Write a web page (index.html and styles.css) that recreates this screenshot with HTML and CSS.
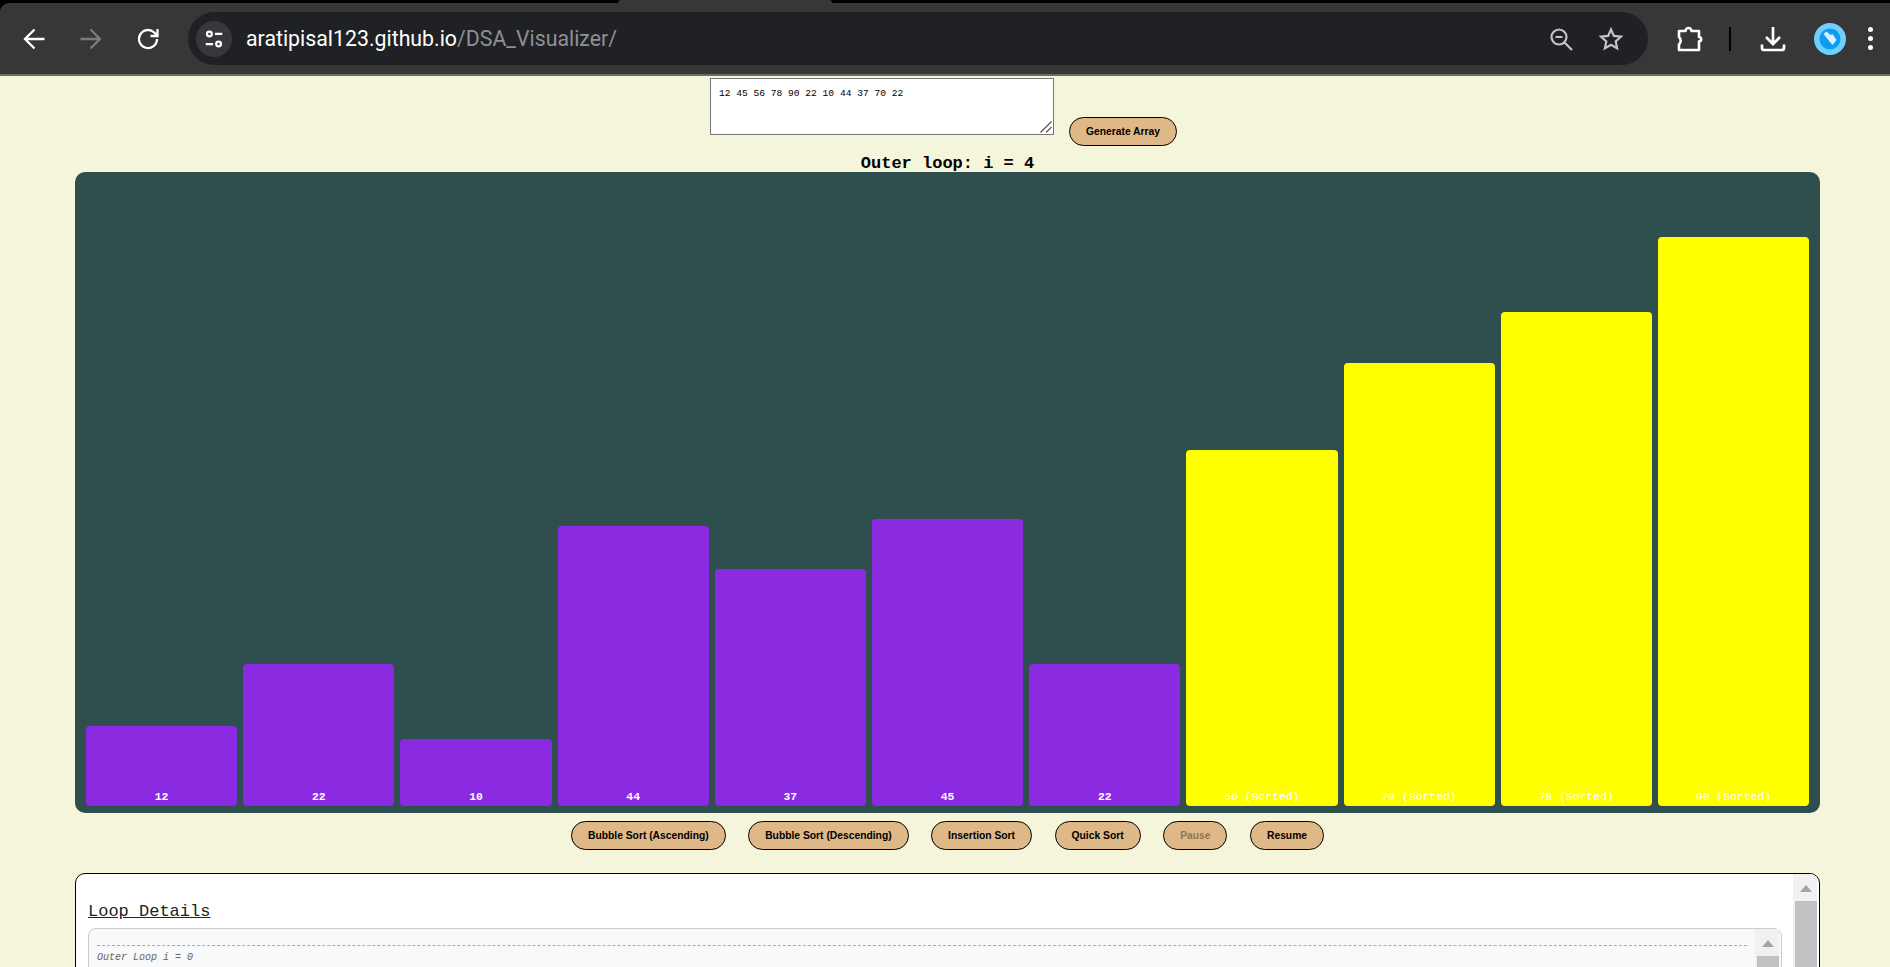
FILE: index.html
```html
<!DOCTYPE html>
<html lang="en">

<head>
     <meta charset="UTF-8">
     <meta name="viewport" content="width=device-width, initial-scale=1.0">
     <title>DSA Visualizer</title>
     <link rel="stylesheet" href="styles.css">
</head>

<body>
     <!-- Browser toolbar -->
     <div class="window-top">
          <span class="active-tab"></span>
          <header class="toolbar">
               <svg class="tool-icon" viewBox="0 0 26 26"><path d="M23.500 13H5M13.500 3.500 4 13l9.500 9.500" /></svg>
               <svg class="tool-icon tool-off" viewBox="0 0 26 26"><path d="M2.500 13H21M12.500 3.500 22 13l-9.500 9.500" /></svg>
               <svg class="tool-icon reload-icon" viewBox="0 0 26 26"><path d="M22 13a9 9 0 1 1-2.800-6.500L22 9.200M22.500 3v7H15.500" /></svg>
               <div class="omnibox">
                    <span class="site-info">
                         <svg viewBox="0 0 24 24"><circle cx="7" cy="6.500" r="2.600" /><path d="M13 6.500h8M3 17.500h8" /><circle cx="17" cy="17.500" r="2.600" /></svg>
                    </span>
                    <span class="url">aratipisal123.github.io<span class="url-path">/DSA_Visualizer/</span></span>
                    <svg class="omni-icon" viewBox="0 0 24 24"><circle cx="10" cy="10" r="7.500" /><path d="M6.500 10h7M15.500 15.500 23 23" /></svg>
                    <svg class="omni-icon" viewBox="0 0 24 24"><path d="M12 2.500l2.900 6.400 7 .8-5.200 4.700 1.400 6.900-6.100-3.500-6.100 3.500 1.400-6.900-5.200-4.700 7-.8z" /></svg>
               </div>
               <svg class="tool-icon ext-icon" viewBox="0 0 26 26"><path d="M2 5h6.500a3 3 0 0 1 6 0H22v6a2.200 2.200 0 0 1 0 4.400V24H2v-5.500a5 5 0 0 0 0-7.500z" /></svg>
               <span class="divider"></span>
               <svg class="tool-icon dl-icon" viewBox="0 0 26 26"><path d="M13 1v16.500M6 11l7 7 7-7M2 18.500V22a2 2 0 0 0 2 2h18a2 2 0 0 0 2-2v-3.500" /></svg>
               <svg class="avatar" viewBox="0 0 32 32">
                    <circle cx="16" cy="16" r="16" fill="#6fd0ff" />
                    <circle cx="16" cy="16" r="10.500" fill="#0b9df0" />
                    <path d="M9.500 11 12.500 8.500 16.500 12 18.500 11 22.500 17 18.500 22 13.500 16z" fill="#d8f1ff" />
               </svg>
               <span class="menu-dots"><i></i><i></i><i></i></span>
          </header>
     </div>

     <main class="page">
          <div class="input-row">
               <div class="input-wrap">
                    <textarea class="array-input" spellcheck="false">12 45 56 78 90 22 10 44 37 70 22</textarea>
                    <svg class="resize-grip" viewBox="0 0 12 12"><path d="M0.500 11.500 11.500 0.500M6 11.500 11.500 6" /></svg>
               </div>
               <button class="btn">Generate Array</button>
          </div>
          <h3 class="outer-label">Outer loop: i = 4</h3>

          <section class="bars">
               <div class="bar" style="height: 80px">12</div>
               <div class="bar" style="height: 142px">22</div>
               <div class="bar" style="height: 67px">10</div>
               <div class="bar" style="height: 280px">44</div>
               <div class="bar" style="height: 237px">37</div>
               <div class="bar" style="height: 287px">45</div>
               <div class="bar" style="height: 142px">22</div>
               <div class="bar sorted" style="height: 356px">56 (Sorted)</div>
               <div class="bar sorted" style="height: 443px">70 (Sorted)</div>
               <div class="bar sorted" style="height: 494px">78 (Sorted)</div>
               <div class="bar sorted" style="height: 569px">90 (Sorted)</div>
          </section>

          <div class="controls">
               <button class="btn">Bubble Sort (Ascending)</button>
               <button class="btn">Bubble Sort (Descending)</button>
               <button class="btn">Insertion Sort</button>
               <button class="btn">Quick Sort</button>
               <button class="btn" disabled>Pause</button>
               <button class="btn">Resume</button>
          </div>

          <section class="loop-box">
               <div class="loop-content">
                    <h2 class="loop-title">Loop Details</h2>
                    <div class="loop-log">
                         <div class="log-body">
                              <p class="log-line">Outer Loop i = 0</p>
                         </div>
                         <div class="scrollbar"><span class="arrow"></span><span class="thumb"></span></div>
                    </div>
               </div>
               <div class="scrollbar"><span class="arrow"></span><span class="thumb"></span></div>
          </section>
     </main>
</body>

</html>
```

FILE: styles.css
```css
/* Base styles */
body {
     margin: 0;
     height: 100vh;
     overflow: hidden;
     display: flex;
     flex-direction: column;
     background-color: #f5f5dc;
     font-family: "Liberation Mono", monospace;
}

/* Browser toolbar */
.window-top {
     position: relative;
     padding-top: 3px;
     background-color: #000;
     flex-shrink: 0;
}

.active-tab {
     position: absolute;
     top: 0;
     left: 618px;
     width: 214px;
     height: 3px;
     border-radius: 8px 8px 0 0;
     background-color: #373737;
}

.toolbar {
     height: 71px;
     border-bottom: 2px solid #6b6b66;
     border-radius: 9px 0 0 0;
     background-color: #373737;
     display: flex;
     align-items: center;
     padding-left: 21px;
}

.tool-icon {
     width: 26px;
     height: 26px;
     margin-right: 31px;
     fill: none;
     stroke: #fff;
     stroke-width: 2.300;
     flex-shrink: 0;
}

.tool-off {
     stroke: #7b7b7b;
}

.reload-icon {
     margin-right: 27px;
}

.omnibox {
     width: 1460px;
     height: 53px;
     border-radius: 27px;
     background-color: #202124;
     display: flex;
     align-items: center;
     flex-shrink: 0;
}

.site-info {
     width: 36px;
     height: 36px;
     margin: 0 14px 0 8px;
     border-radius: 50%;
     background-color: #37383b;
     display: flex;
     align-items: center;
     justify-content: center;
}

.site-info svg {
     width: 22px;
     height: 22px;
     fill: none;
     stroke: #fff;
     stroke-width: 2.400;
}

.url {
     flex: 1;
     color: #fff;
     font-family: Roboto, sans-serif;
     font-size: 21.300px;
}

.url-path {
     color: #8f9094;
}

.omni-icon {
     width: 24px;
     height: 24px;
     margin-right: 25px;
     margin-left: 1px;
     fill: none;
     stroke: #c4c4c4;
     stroke-width: 2.200;
}

.ext-icon {
     margin: 0 26px 0 29px;
     stroke-width: 2.600;
     stroke-linejoin: round;
}

.divider {
     width: 2px;
     height: 24px;
     background-color: #000;
     margin-right: 29px;
     flex-shrink: 0;
}

.dl-icon {
     margin-right: 28px;
     stroke-width: 2.700;
}

.avatar {
     width: 32px;
     height: 32px;
     flex-shrink: 0;
}

.menu-dots {
     margin-left: 22px;
     display: flex;
     flex-direction: column;
     gap: 4px;
}

.menu-dots i {
     width: 5px;
     height: 5px;
     border-radius: 50%;
     background-color: #fff;
}

/* Page */
.page {
     flex: 1;
     min-height: 0;
     overflow: hidden;
     display: flex;
     flex-direction: column;
     padding: 2px 70px 0 75px;
}

.input-row {
     display: flex;
     justify-content: center;
     align-items: flex-end;
     gap: 15px;
     padding-right: 8px;
     flex-shrink: 0;
}

.input-wrap {
     position: relative;
     display: flex;
     margin-bottom: 11px;
}

.array-input {
     width: 344px;
     height: 57px;
     box-sizing: border-box;
     padding: 9px 8px;
     border: 1px solid #767676;
     background: #fff;
     color: #000;
     font-family: "Liberation Mono", monospace;
     font-size: 9.600px;
     resize: none;
}

.resize-grip {
     position: absolute;
     right: 2px;
     bottom: 2px;
     width: 12px;
     height: 12px;
     fill: none;
     stroke: #555;
     stroke-width: 1.200;
}

.btn {
     height: 29px;
     padding: 0 16px;
     border: 1px solid #000;
     border-radius: 15px;
     background-color: #deb887;
     color: #000;
     font-family: "Liberation Sans", sans-serif;
     font-size: 10.300px;
     font-weight: bold;
}

.btn:disabled {
     color: rgba(0, 0, 0, 0.4);
}

.outer-label {
     margin: 0;
     height: 26px;
     box-sizing: border-box;
     padding-top: 8px;
     line-height: 19px;
     text-align: center;
     font-size: 17px;
     color: #000;
     flex-shrink: 0;
}

/* Bars */
.bars {
     height: 641px;
     box-sizing: border-box;
     padding: 0 11px 7px 11px;
     border-radius: 10px;
     background-color: #2f4f4f;
     display: flex;
     align-items: flex-end;
     gap: 6px;
     flex-shrink: 0;
}

.bar {
     flex: 1;
     border-radius: 4px;
     background-color: #8a2be2;
     color: #fff;
     font-size: 11.400px;
     font-weight: bold;
     display: flex;
     align-items: flex-end;
     justify-content: center;
     padding-bottom: 3px;
     box-sizing: border-box;
}

.sorted {
     background-color: #ffff00;
     font-weight: normal;
}

.controls {
     display: flex;
     justify-content: center;
     gap: 22.500px;
     margin-top: 8px;
     flex-shrink: 0;
}

/* Loop details */
.loop-box {
     margin-top: 23px;
     height: 130px;
     box-sizing: border-box;
     border: 1px solid #000;
     border-radius: 10px 10px 0 0;
     background-color: #fff;
     display: flex;
     flex-shrink: 0;
     overflow: hidden;
}

.loop-content {
     flex: 1;
     min-width: 0;
     padding: 28px 11px 0 12px;
}

.loop-title {
     margin: 0 0 6px;
     font-size: 17px;
     font-weight: normal;
     line-height: 20px;
     color: #222;
     text-decoration: underline;
}

.loop-log {
     height: 200px;
     box-sizing: border-box;
     border: 1px solid #ccc;
     border-radius: 8px;
     background-color: #f8f9fa;
     display: flex;
}

.log-body {
     flex: 1;
     padding: 16px 8px 0;
}

.log-line {
     margin: 0;
     border-top: 1px dashed #aaa;
     padding-top: 6px;
     font-size: 10px;
     font-style: italic;
     color: #666;
}

/* Scrollbars */
.scrollbar {
     width: 24px;
     margin-right: 2px;
     background-color: #f1f1f1;
     display: flex;
     flex-direction: column;
     align-items: flex-end;
     flex-shrink: 0;
}

.arrow {
     width: 0;
     height: 0;
     margin: 11px 5px 9px 0;
     border-left: 6px solid transparent;
     border-right: 6px solid transparent;
     border-bottom: 7px solid #a3a3a3;
}

.thumb {
     width: 22px;
     flex: 1;
     background-color: #c1c1c1;
}
```
